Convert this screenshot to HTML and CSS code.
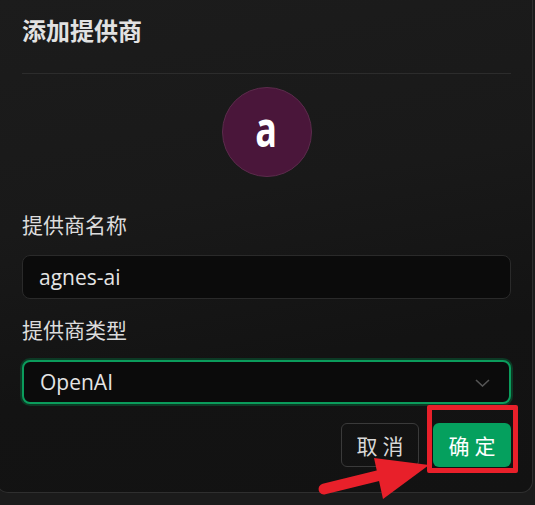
FILE: index.html
```html
<!DOCTYPE html>
<html>
<head>
  <title>添加提供商</title>
  <link rel="stylesheet" href="styles.css">
</head>
<body>
  <div class="dialog">
    <div class="dialog-header">
      <h1 class="dialog-title">添加提供商</h1>
    </div>
    <div class="dialog-body">
      <div class="avatar"><span class="avatar-letter">a</span></div>

      <label class="field-label">提供商名称</label>
      <div class="text-input">agnes-ai</div>

      <label class="field-label second">提供商类型</label>
      <div class="select-input">
        <span>OpenAI</span>
        <svg class="chevron" width="15" height="8" viewBox="0 0 15 8">
          <path d="M1 1 L7.5 7 L14 1" fill="none" stroke="#555" stroke-width="1.6"/>
        </svg>
      </div>
    </div>
    <div class="dialog-footer">
      <button class="btn btn-cancel">取消</button>
      <button class="btn btn-ok">确定</button>
      <!-- annotation overlay -->
      <div class="highlight-box"></div>
    </div>
  </div>

  <svg class="arrow" width="535" height="505" viewBox="0 0 535 505">
    <line x1="324" y1="489" x2="385" y2="474" stroke="#e8202a" stroke-width="11" stroke-linecap="round"/>
    <polygon points="374,458 429,465 383,499" fill="#e8202a"/>
  </svg>
</body>
</html>
```

FILE: styles.css
```css
/* dark modal dialog */
body {
  margin: 0;
  background: #1b1b1b;
  font-family: "Open Sans", "Noto Sans CJK SC", sans-serif;
  overflow: hidden;
  position: relative;
  width: 535px;
  height: 505px;
}

.dialog {
  margin-left: -4px;
  width: 537px;
  height: 493px;
  box-sizing: border-box;
  border: 1px solid #2f2f2f;
  border-top: none;
  border-radius: 0 0 12px 12px;
  background: linear-gradient(170deg, #1c1c1c 0%, #191919 40%, #131313 70%, #121212 100%);
  padding: 0 21px 0 25px;
  display: flex;
  flex-direction: column;
}

.dialog-header {
  padding-top: 14px;
  border-bottom: 1px solid #2c2c2c;
  padding-bottom: 27px;
}

.dialog-title {
  margin: 0;
  font-family: "Noto Sans CJK SC", sans-serif;
  font-size: 24px;
  font-weight: 700;
  line-height: 32px;
  color: #e2e2e2;
}

.dialog-body {
  display: flex;
  flex-direction: column;
}

.avatar {
  align-self: center;
  margin-top: 13px;
  width: 88px;
  height: 88px;
  border-radius: 50%;
  background: #4a163a;
  border: 1px solid #5c2b4c;
  display: flex;
  align-items: center;
  justify-content: center;
}

.avatar-letter {
  color: #fff;
  font-size: 50px;
  font-weight: 700;
  line-height: 1;
  margin-top: -8px;
  transform: scaleX(0.72);
}

.field-label {
  margin-top: 33px;
  font-family: "Noto Sans CJK SC", sans-serif;
  font-size: 21px;
  line-height: 28px;
  color: #dcdcdc;
}

.field-label.second {
  margin-top: 16px;
}

.text-input,
.select-input {
  margin-top: 17px;
  height: 44px;
  box-sizing: border-box;
  border-radius: 8px;
  background: #0b0b0b;
  border: 1px solid #2a2a2a;
  padding: 0 16px;
  display: flex;
  align-items: center;
  font-size: 21px;
  color: #e4e4e4;
}

.select-input {
  margin-top: 17px;
  border: 2px solid #0b9c5c;
  box-shadow: 0 0 0 2px #0c3a25;
  justify-content: space-between;
  padding-left: 16px;
  padding-right: 19px;
}

.chevron {
  margin-top: 2px;
}

.dialog-footer {
  position: relative;
  margin-top: 19px;
  display: flex;
  justify-content: flex-end;
  gap: 14px;
}

.btn {
  height: 44px;
  width: 78px;
  border-radius: 6px;
  font-family: "Noto Sans CJK SC", sans-serif;
  font-size: 21px;
  letter-spacing: 5px;
  text-indent: 5px;
  padding: 0;
}

.btn-cancel {
  background: transparent;
  border: 1px solid #3a3a3a;
  color: #d8d8d8;
}

.btn-ok {
  background: #05a05e;
  border: none;
  color: #fff;
}

.highlight-box {
  position: absolute;
  right: -7px;
  top: -18px;
  width: 91px;
  height: 68px;
  box-sizing: border-box;
  border: 5px solid #e8202a;
  border-radius: 2px;
}

.arrow {
  position: absolute;
  left: 0;
  top: 0;
  pointer-events: none;
}
```
